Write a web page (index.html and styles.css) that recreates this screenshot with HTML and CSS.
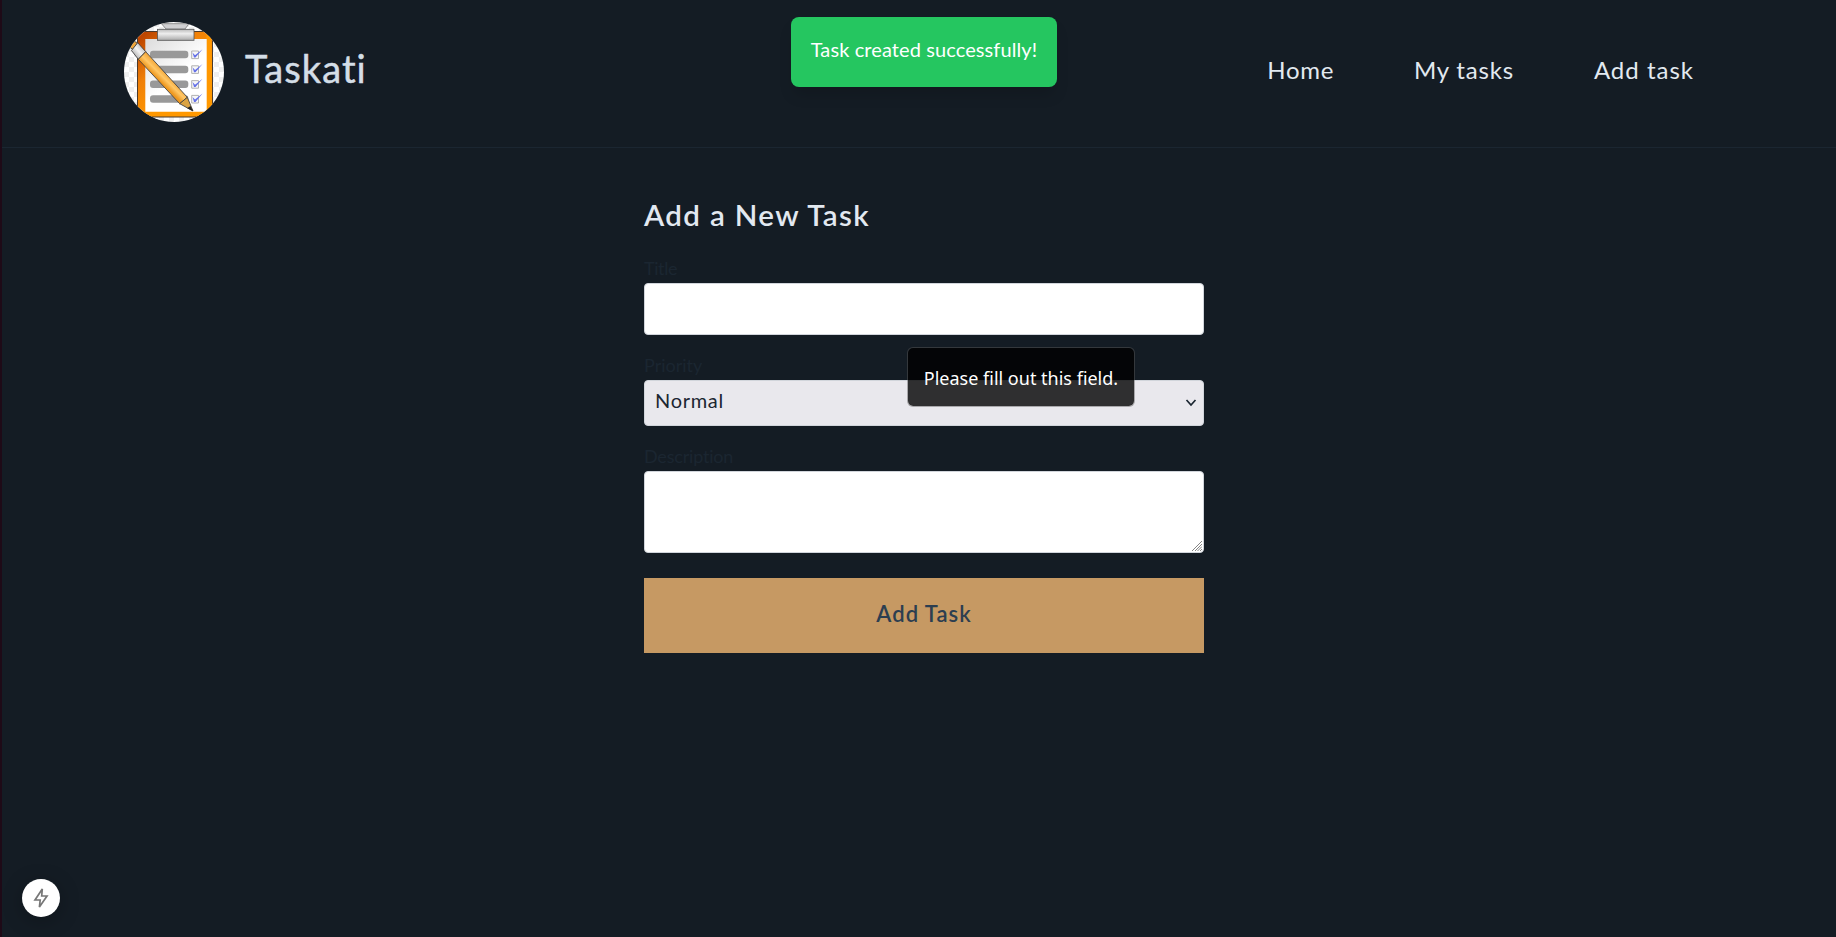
FILE: index.html
```html
<!DOCTYPE html>
<html lang="en">
<head>
<meta charset="utf-8">
<title>Taskati</title>
<link rel="stylesheet" href="styles.css">
</head>
<body>
<header class="header">
  <a class="brand">
    <svg class="logo" viewBox="0 0 100 100">
      <defs>
        <clipPath id="round"><circle cx="50" cy="50" r="50"/></clipPath>
        <pattern id="checker" width="10" height="10" patternUnits="userSpaceOnUse"><path fill="#fff" d="M0 0h10v10H0z"/><path fill="#efefef" d="M0 0h5v5H0zM5 5h5v5H5z"/></pattern>
        <linearGradient id="board" x1="0" y1="0" x2=".55" y2=".7"><stop offset=".1" stop-color="#bd4600"/><stop offset=".55" stop-color="#f08008"/><stop offset="1" stop-color="#ff9800"/></linearGradient>
        <linearGradient id="paper" x1="0" y1="0" x2=".7" y2="1"><stop offset="0" stop-color="#dcdcdc"/><stop offset=".6" stop-color="#fff"/></linearGradient>
        <linearGradient id="metal" x1="0" y1="0" x2="0" y2="1"><stop offset="0" stop-color="#bbb"/><stop offset=".4" stop-color="#eee"/><stop offset="1" stop-color="#aaa"/></linearGradient>
        <linearGradient id="ferrule" x1="0" y1="1" x2="1" y2="0"><stop offset=".1" stop-color="#999"/><stop offset=".5" stop-color="#f4f4f4"/><stop offset=".9" stop-color="#aaa"/></linearGradient>
        <linearGradient id="wood" gradientUnits="userSpaceOnUse" x1="36" y1="59" x2="43" y2="52"><stop offset="0" stop-color="#ee9820"/><stop offset=".5" stop-color="#ffc766"/><stop offset="1" stop-color="#f5a83a"/></linearGradient>
      </defs>
      <g clip-path="url(#round)">
        <path fill="url(#checker)" d="M0 0h100v100H0z"/>
        <rect x="13.5" y="9.5" width="75" height="85.5" rx="2" fill="url(#board)" stroke="#4b3a2c"/>
        <path fill="#ff9800" d="M82.500 10H87v84H14v-4h68.500z"/>
        <path fill="url(#paper)" d="M21.300 17h61.400v72.700H21.300z"/>
        <path fill="#d0d0d2" stroke="#777" stroke-width=".8" d="M37.500 1.700h27.500L61 7H42z"/>
        <rect x="33.500" y="7.300" width="36.500" height="11" fill="url(#metal)" stroke="#555" stroke-width=".8"/>
        <g fill="#999"><rect x="26" y="28.800" width="38.300" height="7.400" rx="3"/><rect x="26" y="43.800" width="38.300" height="7.400" rx="3"/><rect x="26" y="58.500" width="38.300" height="7.400" rx="3"/><rect x="26" y="73.300" width="38.300" height="7.400" rx="3"/></g>
        <g fill="#f7f7f7" stroke="#aaa" stroke-width=".9"><path d="M67.700 29h6.800v7.600h-6.800zM67.700 43.800h6.800v7.600h-6.800zM67.700 58.600h6.800v7.600h-6.800zM67.700 73.400h6.800v7.600h-6.800z"/></g>
        <g fill="#6470e8"><path id="tick" d="M68.500 30.500l2.500 2.700 7.500-6-7 8.300h-1.500z"/><use href="#tick" y="14.800"/><use href="#tick" y="29.600"/><use href="#tick" y="44.400"/></g>
        <g stroke="#444" stroke-width=".9" stroke-linejoin="round">
          <path fill="#efa63b" d="M5.500 25l4.800-5.500 3.400 1.200-5 6.600z"/>
          <path fill="url(#ferrule)" d="M7.500 28.500l6.200-7.800 8 9-7.400 7.600z"/>
          <path fill="url(#wood)" d="M21.700 29.700l41.600 45.600-7.600 6.400-41.400-44.400z"/>
          <path fill="#dba342" d="M63.300 75.300L69 89l-13.300-7.300z"/>
        </g>
        <path fill="#222" d="M66.500 84l2.700 5.300-6-3z"/>
      </g>
    </svg>
    <span class="brand-name">Taskati</span>
  </a>
  <nav class="nav">
    <a class="nav-home">Home</a>
    <a class="nav-tasks">My tasks</a>
    <a class="nav-add">Add task</a>
  </nav>
</header>
<main class="main">
  <form class="form">
    <h1 class="heading">Add a New Task</h1>
    <label class="label label-title" for="title">Title</label>
    <input class="field input" id="title">
    <label class="label" for="priority">Priority</label>
    <div class="field select" id="priority">
      <span>Normal</span>
      <svg class="chevron" viewBox="0 0 12 8"><path d="M1.500 1l4.500 5 4.500-5"/></svg>
    </div>
    <label class="label label-description" for="description">Description</label>
    <div class="textarea-wrap">
      <textarea class="field textarea" id="description"></textarea>
      <svg class="grip" viewBox="0 0 10 10"><path d="M0 10L10 0M3 10l7-7M5.500 10L10 5.500M8 10l2-2"/></svg>
    </div>
    <button class="submit" type="button">Add Task</button>
  </form>
</main>
<div class="toast">Task created successfully!</div>
<div class="tooltip">Please fill out this field.</div>
<div class="badge">
  <svg viewBox="0 0 16 22"><path d="M9.300 2L2 13h5.200l-.8 7L14 9H8.700z"/></svg>
</div>
</body>
</html>
```
FILE: styles.css
```css
* { box-sizing: border-box; }
body {
  margin: 0;
  height: 937px;
  overflow: hidden;
  background: #141c24;
  border-left: 2px solid #1e0a17;
  color: #d4dee7;
  font-family: Lato, sans-serif;
  font-variant-ligatures: none;
}
.header {
  height: 148px;
  padding: 22px 142px 25px 122px;
  border-bottom: 1px solid #1b2631;
  display: flex;
  justify-content: space-between;
}
.brand { display: flex; align-items: center; gap: 21px; }
.logo { width: 100px; height: 100px; }
.brand-name {
  padding-bottom: 8px;
  font-size: 38px;
  line-height: 44px;
  letter-spacing: 1.1px;
  -webkit-text-stroke: .5px #d4dee7;
}
.nav { display: flex; align-items: center; gap: 80px; padding-bottom: 4px; font-size: 24px; line-height: 30px; color: #e2e9f0; }
.nav-home { letter-spacing: .7px; }
.nav-tasks { letter-spacing: .8px; }
.nav-add { letter-spacing: 1px; }
.main { display: flex; justify-content: center; padding: 47px 0 0 10px; }
.form { width: 560px; display: flex; flex-direction: column; }
.heading { margin: 0 0 21px; font-size: 29.5px; font-weight: 600; line-height: 40px; letter-spacing: 1.35px; color: #e2e8f0; }
.label { height: 27px; line-height: 25px; font-size: 18px; color: #1b2631; }
.label-title { letter-spacing: -.4px; }
.label-description { letter-spacing: -.2px; }
.field { width: 100%; border: 1px solid #d1d5db; border-radius: 4px; background: #fff; }
.input { height: 52px; margin-bottom: 18px; }
.select {
  height: 46px;
  margin-bottom: 18px;
  padding: 0 6px 0 10px;
  display: flex;
  align-items: center;
  justify-content: space-between;
  background: #e9e8ed;
  color: #1b2631;
  font-size: 20px;
  letter-spacing: .7px;
}
.select span { padding-bottom: 6px; }
.chevron { width: 12px; height: 8px; fill: none; stroke: #1b2631; stroke-width: 1.7; }
.textarea-wrap { position: relative; height: 82px; margin-bottom: 25px; }
.textarea { height: 82px; resize: none; display: block; }
.grip { position: absolute; right: 2px; bottom: 2px; width: 10px; height: 10px; stroke: #777; stroke-width: .9; }
.submit {
  height: 75px;
  padding: 0 0 4px;
  border: 0;
  background: #c69963;
  color: #2c3e50;
  font: 600 22px/30px Lato, sans-serif;
  letter-spacing: 1px;
}
.toast {
  position: absolute;
  left: 791px;
  top: 17px;
  width: 266px;
  height: 70px;
  padding-bottom: 6px;
  border-radius: 8px;
  background: #25c660;
  box-shadow: 0 10px 15px -3px rgba(0, 0, 0, .15);
  color: #fff;
  font-size: 20px;
  letter-spacing: .1px;
  display: flex;
  align-items: center;
  justify-content: center;
  white-space: nowrap;
}
.tooltip {
  position: absolute;
  left: 907px;
  top: 347px;
  width: 228px;
  height: 60px;
  padding-top: 1px;
  border: 1px solid rgba(90, 90, 90, .45);
  border-radius: 6px;
  background: rgba(0, 0, 0, .8);
  background-clip: padding-box;
  color: #fff;
  font: 18px/24px "Noto Sans", sans-serif;
  display: flex;
  align-items: center;
  justify-content: center;
  white-space: nowrap;
}
.badge {
  position: absolute;
  left: 22px;
  top: 879px;
  width: 38px;
  height: 38px;
  border-radius: 50%;
  background: #fff;
  box-shadow: 0 4px 20px rgba(0, 0, 0, .25);
  display: flex;
  align-items: center;
  justify-content: center;
}
.badge svg { width: 16px; height: 22px; fill: none; stroke: #777; stroke-width: 1.7; stroke-linejoin: miter; }
```
